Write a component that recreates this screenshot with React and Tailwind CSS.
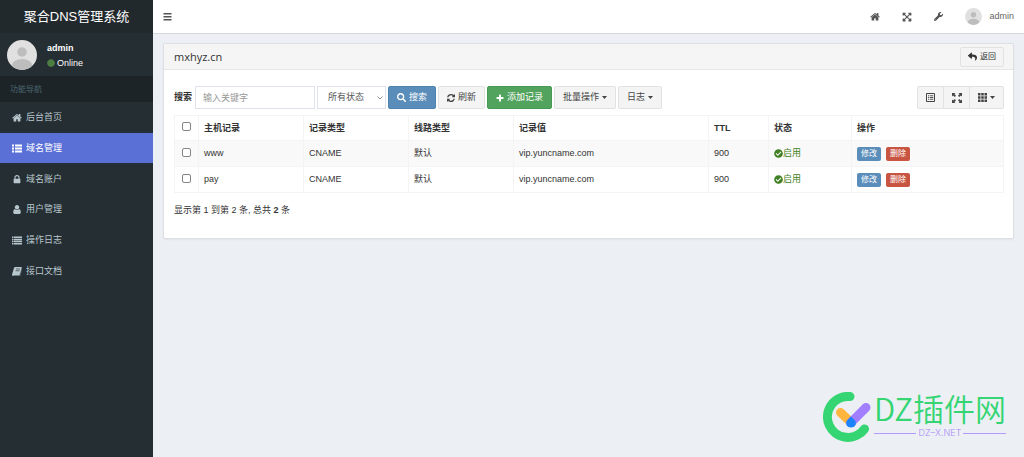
import {
  FaWrench,
  FaReply,
  FaSearch,
  FaCheckCircle,
  FaExpandArrowsAlt,
  FaCircle,
} from "react-icons/fa";
import clsx from "clsx";

const HomeIcon = ({ className }) => (
  <svg viewBox="50 100 1692 1500" fill="currentColor" className={className}>
    <path d="M1472 992v480q0 26-19 45t-45 19h-384v-384h-256v384h-384q-26 0-45-19t-19-45v-480q0-1 .5-3t.5-3l575-474 575 474q1 2 1 6zm223-69l-62 74q-8 9-21 11h-3q-13 0-21-7l-692-577-692 577q-12 8-24 7-13-2-21-11l-62-74q-8-10-7-23.500t11-21.500l719-599q32-26 76-26t76 26l244 204v-195q0-14 9-23t23-9h192q14 0 23 9t9 23v408l219 182q10 8 11 21.500t-7 23.500z" />
  </svg>
);

const LockIcon = ({ className }) => (
  <svg viewBox="128 128 1536 1536" fill="currentColor" className={className}>
    <path d="M640 768h512v-192q0-106-75-181t-181-75-181 75-75 181v192zm832 96v576q0 40-28 68t-68 28h-960q-40 0-68-28t-28-68v-576q0-40 28-68t68-28h32v-192q0-184 132-316t316-132 316 132 132 316v192h32q40 0 68 28t28 68z" />
  </svg>
);

const UserIcon = ({ className }) => (
  <svg viewBox="128 128 1536 1536" fill="currentColor" className={className}>
    <path d="M1536 1399q0 109-62.500 187t-150.500 78h-854q-88 0-150.500-78t-62.500-187q0-85 8.500-160.500t31.500-152 58.500-131 94-89 134.500-34.500q131 128 313 128t313-128q76 0 134.500 34.500t94 89 58.500 131 31.500 152 8.500 160.500zm-256-887q0 159-112.500 271.500t-271.500 112.500-271.500-112.500-112.500-271.500 112.500-271.500 271.500-112.500 271.500 112.500 112.500 271.500z" />
  </svg>
);

const BookIcon = ({ className }) => (
  <svg viewBox="0 0 20 18" className={className}>
    <path
      d="M6.500 0H18q2 0 1.500 2L16 14q-.6 2-2.500 2H4q-1.500 0-1.200 1H14.500q1.500 0 2-1.500L20 5v1l-3.300 10.500Q16 18 14.500 18H3Q0 18 0 15L4 2Q4.700 0 6.500 0z"
      fill="currentColor"
    />
    <path d="M8 4h8M7 7.500h8" stroke="#252e32" strokeWidth="1.300" />
  </svg>
);

const ListUlIcon = ({ className }) => (
  <svg viewBox="0 0 20 18" fill="currentColor" className={className}>
    <path d="M0 1h4v4H0zM6 1h14v4H6zM0 7h4v4H0zM6 7h14v4H6zM0 13h4v4H0zM6 13h14v4H6z" />
  </svg>
);

const ListIcon = ({ className }) => (
  <svg viewBox="0 0 20 18" fill="currentColor" className={className}>
    <path d="M0 1h3v3H0zM4 1h16v3H4zM0 5.300h3v3H0zM4 5.300h16v3H4zM0 9.600h3v3H0zM4 9.600h16v3H4zM0 14h3v3H0zM4 14h16v3H4z" />
  </svg>
);

const BarsIcon = ({ className }) => (
  <svg viewBox="0 0 18 18" fill="currentColor" className={className}>
    <path d="M1 2h16v3H1zM1 8h16v3H1zM1 14h16v3H1z" />
  </svg>
);

const PlusIcon = ({ className }) => (
  <svg viewBox="0 0 16 16" fill="currentColor" className={className}>
    <path d="M7 1h2q1 0 1 1v4h4q1 0 1 1v2q0 1-1 1h-4v4q0 1-1 1H7q-1 0-1-1v-4H2q-1 0-1-1V7q0-1 1-1h4V2q0-1 1-1z" />
  </svg>
);

const CaretIcon = ({ className }) => (
  <svg viewBox="0 0 10 6" fill="currentColor" className={className}>
    <path d="M0 0h10L5 6z" />
  </svg>
);

const RefreshIcon = ({ className }) => (
  <svg viewBox="0 0 1536 1536" fill="currentColor" className={className}>
    <path d="M1511 928q0 5-1 7-64 268-268 434.500T764 1536q-146 0-282.500-55T238 1324l-129 129q-19 19-45 19t-45-19-19-45V960q0-26 19-45t45-19h448q26 0 45 19t19 45-19 45l-137 137q71 66 161 102t187 36q134 0 250-65t186-179q11-17 53-117 8-23 30-23h192q13 0 22.500 9.500t9.500 22.500zm25-800v448q0 26-19 45t-45 19h-448q-26 0-45-19t-19-45 19-45l138-138Q969 256 768 256q-134 0-250 65T332 500q-11 17-53 117-8 23-30 23H50q-13 0-22.500-9.500T18 608v-7q65-268 270-434.500T768 0q146 0 284 55.500T1297 212l130-129q19-19 45-19t45 19 19 45z" />
  </svg>
);

const ListAltIcon = ({ className }) => (
  <svg viewBox="0 0 18 18" fill="none" stroke="currentColor" className={className}>
    <path d="M1 1h16v16H1z" strokeWidth="2" />
    <path d="M4 5.500h2M7.500 5.500h7M4 9h2M7.500 9h7M4 12.500h2M7.500 12.500h7" strokeWidth="1.800" />
  </svg>
);

const FullscreenIcon = ({ className }) => (
  <svg viewBox="0 0 20 20" fill="currentColor" className={className}>
    <path d="M0 0h7L4.800 2.200 8 5.500 5.500 8 2.200 4.800 0 7zM20 0v7l-2.200-2.200L14.500 8 12 5.500l3.200-3.300L13 0zM0 20v-7l2.200 2.200L5.500 12 8 14.500l-3.200 3.300L7 20zM20 20h-7l2.200-2.200L12 14.500l2.500-2.500 3.300 3.200L20 13z" />
  </svg>
);

const ThIcon = ({ className }) => (
  <svg viewBox="0 0 18 18" fill="currentColor" className={className}>
    <path d="M0 0h5v5H0zM6.500 0h5v5h-5zM13 0h5v5h-5zM0 6.500h5v5H0zM6.500 6.500h5v5h-5zM13 6.500h5v5h-5zM0 13h5v5H0zM6.500 13h5v5h-5zM13 13h5v5h-5z" />
  </svg>
);

const Avatar = ({ className }) => (
  <svg viewBox="0 0 60 60" className={clsx("rounded-full", className)}>
    <rect width="60" height="60" fill="#e0e0e0" />
    <circle cx="30" cy="24" r="9.500" fill="#bdbdbd" />
    <ellipse cx="30" cy="50" rx="20" ry="12" fill="#bdbdbd" />
  </svg>
);

const menus = [
  { label: "后台首页", icon: HomeIcon },
  { label: "域名管理", icon: ListUlIcon, active: true },
  { label: "域名账户", icon: LockIcon },
  { label: "用户管理", icon: UserIcon },
  { label: "操作日志", icon: ListIcon },
  { label: "接口文档", icon: BookIcon },
];

const records = [
  { id: 1, host: "www", type: "CNAME", line: "默认", value: "vip.yuncname.com", ttl: 900 },
  { id: 2, host: "pay", type: "CNAME", line: "默认", value: "vip.yuncname.com", ttl: 900 },
];

const columns = [
  { title: "主机记录", width: "w-[105px]" },
  { title: "记录类型", width: "w-[105px]" },
  { title: "线路类型", width: "w-[105px]" },
  { title: "记录值", width: "w-[195px]" },
  { title: "TTL", width: "w-[60px]" },
  { title: "状态", width: "w-[83px]" },
  { title: "操作", width: "" },
];

const buttonStyles = {
  default: "bg-[#f4f4f4] border-[#e2e2e2] text-[#444]",
  primary: "bg-[#5a8db9] border-[#4f83b0] text-white",
  success: "bg-[#52a35d] border-[#479a53] text-white",
};

const Button = ({ variant = "default", className, children, ...props }) => (
  <button
    type="button"
    className={clsx(
      "flex h-[23px] shrink-0 items-center justify-center gap-[3px] rounded-xs border whitespace-nowrap",
      buttonStyles[variant],
      className
    )}
    {...props}
  >
    {children}
  </button>
);

const Sidebar = () => (
  <aside className="w-[153px] shrink-0 bg-[#252e32] text-[#b8c7ce]">
    <a
      href="#"
      className="flex h-[33px] items-center justify-center bg-[#22292d] text-[13px] text-white"
    >
      聚合DNS管理系统
    </a>
    <div className="flex h-[43px] items-center gap-[10px] px-[7px]">
      <Avatar className="h-[30px] w-[30px]" />
      <div className="pt-0.5 text-white">
        <p className="leading-[14px] font-bold">admin</p>
        <a href="#" className="flex items-center gap-0.5 leading-4">
          <FaCircle className="h-2 w-2 text-[#4c7d42]" />
          Online
        </a>
      </div>
    </div>
    <nav>
      <h2 className="flex h-[26px] items-center bg-[#1c2428] px-[10px] text-[8px] text-[#4b646f]">
        功能导航
      </h2>
      <ul className="grid h-[184px] grid-rows-6">
        {menus.map(({ label, icon: Icon, active }) => (
          <li key={label}>
            <a
              href="#"
              className={clsx(
                "flex h-full items-center gap-1 px-3 pt-px",
                active && "bg-[#5b70d7] text-white"
              )}
            >
              <Icon className="h-[9px] w-[10px]" />
              {label}
            </a>
          </li>
        ))}
      </ul>
    </nav>
  </aside>
);

const Navbar = () => (
  <header className="flex h-[34px] items-center justify-between border-b border-[#d5d8dc] bg-white px-[10px] text-[#555]">
    <button type="button" aria-label="切换菜单">
      <BarsIcon className="h-[9px] w-[9px]" />
    </button>
    <div className="flex items-center gap-[22px]">
      <a href="#" aria-label="首页">
        <HomeIcon className="h-[9px] w-[10px]" />
      </a>
      <button type="button" aria-label="全屏">
        <FaExpandArrowsAlt className="h-[10px] w-[10px]" />
      </button>
      <button type="button" aria-label="设置">
        <FaWrench className="h-[9px] w-[9px]" />
      </button>
      <a href="#" className="flex items-center gap-[7px] text-[#666]">
        <Avatar className="h-[17px] w-[17px]" />
        admin
      </a>
    </div>
  </header>
);

const Toolbar = () => (
  <div className="flex items-center justify-between">
    <form className="flex items-center gap-0.5">
      <label htmlFor="kw" className="font-bold">
        搜索
      </label>
      <input
        id="kw"
        type="text"
        placeholder="输入关键字"
        className="ml-px h-[23px] w-[120px] border border-[#dfe2ea] px-[7px] placeholder:text-[#999]"
      />
      <div className="relative">
        <select
          aria-label="状态"
          className="h-[23px] w-[69px] appearance-none border border-[#dfe2ea] bg-white pr-4 pl-[10px] text-[#555]"
        >
          <option>所有状态</option>
        </select>
        <svg
          viewBox="0 0 6 4"
          fill="none"
          stroke="#777"
          className="pointer-events-none absolute top-[10px] right-[3px] h-1 w-1.5"
        >
          <path d="M.5.5 3 3 5.500.5" strokeWidth=".8" />
        </svg>
      </div>
      <Button variant="primary" className="px-2">
        <FaSearch className="h-[9px] w-[9px]" />
        搜索
      </Button>
      <Button className="px-2">
        <RefreshIcon className="h-2 w-2" />
        刷新
      </Button>
      <Button variant="success" className="px-2">
        <PlusIcon className="h-2 w-2" />
        添加记录
      </Button>
      <Button className="px-2">
        批量操作
        <CaretIcon className="h-[3px] w-[5px]" />
      </Button>
      <Button className="px-2">
        日志
        <CaretIcon className="h-[3px] w-[5px]" />
      </Button>
    </form>
    <div className="flex">
      <Button className="w-[27px] rounded-r-none" aria-label="切换视图">
        <ListAltIcon className="h-[9px] w-[9px]" />
      </Button>
      <Button className="-ml-px w-[27px] rounded-none" aria-label="全屏显示">
        <FullscreenIcon className="h-[10px] w-[10px]" />
      </Button>
      <Button className="-ml-px w-[35px] rounded-l-none" aria-label="显示列">
        <ThIcon className="h-[9px] w-[9px]" />
        <CaretIcon className="h-[3px] w-[5px]" />
      </Button>
    </div>
  </div>
);

const Checkbox = ({ label }) => (
  <input
    type="checkbox"
    aria-label={label}
    className="mx-auto mb-[3px] block h-[9px] w-[9px] appearance-none rounded-xs border border-[#858585] bg-white"
  />
);

const RecordTable = () => (
  <table className="mt-1.5 w-full table-fixed border-collapse text-left">
    <thead>
      <tr className="h-[25px]">
        <th className="w-6 border border-[#f4f4f4]">
          <Checkbox label="全选" />
        </th>
        {columns.map((col) => (
          <th key={col.title} className={clsx("border border-[#f4f4f4] px-[5px]", col.width)}>
            {col.title}
          </th>
        ))}
      </tr>
    </thead>
    <tbody>
      {records.map((row) => (
        <tr key={row.id} className="h-[26px] odd:bg-[#f9f9f9]">
          <td className="border border-[#f4f4f4]">
            <Checkbox label={row.host} />
          </td>
          <td className="border border-[#f4f4f4] px-[5px]">{row.host}</td>
          <td className="border border-[#f4f4f4] px-[5px]">{row.type}</td>
          <td className="border border-[#f4f4f4] px-[5px]">{row.line}</td>
          <td className="border border-[#f4f4f4] px-[5px]">{row.value}</td>
          <td className="border border-[#f4f4f4] px-[5px]">{row.ttl}</td>
          <td className="border border-[#f4f4f4] px-[5px]">
            <span className="flex items-center text-[#3f8124]">
              <FaCheckCircle className="h-[9px] w-[9px]" />
              启用
            </span>
          </td>
          <td className="border border-[#f4f4f4] px-[5px]">
            <div className="flex gap-[5px] text-[8px] text-white">
              <button type="button" className="h-[14px] w-6 rounded-xs bg-[#5a8db9] leading-[14px]">
                修改
              </button>
              <button type="button" className="h-[14px] w-6 rounded-xs bg-[#c85442] leading-[14px]">
                删除
              </button>
            </div>
          </td>
        </tr>
      ))}
    </tbody>
  </table>
);

const Watermark = () => (
  <div className="absolute right-[18px] bottom-[15px] flex items-start gap-[3px]">
    <svg viewBox="0 0 48 50" fill="none" strokeLinecap="round" className="h-[50px] w-12">
      <path d="M27 4.500A20.500 20.500 0 1 0 41.500 37" stroke="#35d573" strokeWidth="9" />
      <path d="M17.500 20.500L28 30.500" stroke="#ffb53e" strokeWidth="9" />
      <path d="M28 30.500l15-15" stroke="#a17fff" strokeWidth="9" />
      <path
        d="M28 24.500l4.500 4.500q1.500 6-4.500 6.500-6-.5-4.500-6.500z"
        fill="#1b83fb"
      />
    </svg>
    <div>
      <p className="text-[31px] leading-8 font-[350] text-[#35d573] [font-family:'Noto_Sans_CJK_SC',sans-serif]">
        DZ插件网
      </p>
      <p className="mt-[3px] flex items-center gap-0.5 leading-3 font-light text-[#a98bf8] [font-family:Inter,sans-serif]">
        <span className="h-px flex-1 bg-[#b49af8]" />
        DZ–X.NET
        <span className="h-px flex-1 bg-[#b49af8]" />
      </p>
    </div>
  </div>
);

const App = () => {
  return (
    <div className="relative flex min-h-screen bg-[#ecf0f5] text-[9px] leading-[13px] text-[#333] [font-family:'Liberation_Sans','Noto_Sans_CJK_SC',sans-serif]">
      <Sidebar />
      <div className="min-w-0 flex-1">
        <Navbar />
        <main className="px-[10px] pt-[9px] pb-[10px]">
          <section className="rounded-xs border border-[#dddfe3] bg-white shadow-xs">
            <div className="flex h-[26px] items-center justify-between border-b border-[#e6e6e6] bg-[#f5f5f5] pr-[9px] pl-[10px]">
              <h1 className="text-[11px] [font-family:'Open_Sans',sans-serif]">mxhyz.cn</h1>
              <a
                href="#"
                className="flex h-5 items-center gap-[3px] rounded-xs border border-[#e2e2e2] bg-[#f4f4f4] px-[7px] text-[8px]"
              >
                <FaReply className="h-[9px] w-[9px]" />
                返回
              </a>
            </div>
            <div className="pt-4 pr-[9px] pb-[21px] pl-[10px]">
              <Toolbar />
              <RecordTable />
              <p className="mt-[11px]">
                显示第 1 到第 2 条, 总共 <b>2</b> 条
              </p>
            </div>
          </section>
        </main>
      </div>
      <Watermark />
    </div>
  );
};

export default App;
